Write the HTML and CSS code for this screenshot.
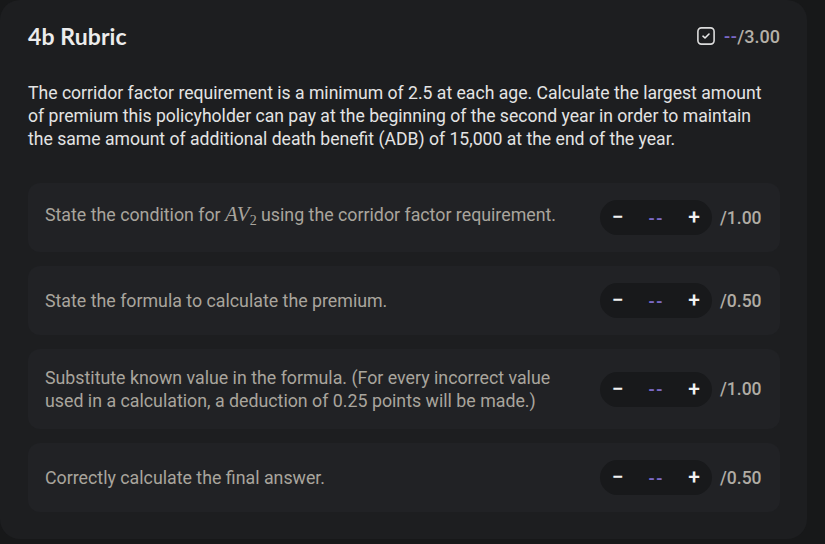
FILE: index.html
```html
<!DOCTYPE html>
<html>
<head>
<meta charset="utf-8">
<link rel="stylesheet" href="styles.css">
</head>
<body>
<div class="card">
  <div class="header">
    <h2 class="title">4b Rubric</h2>
    <div class="total">
      <svg class="check" width="18" height="18" viewBox="0 0 18 18"><rect x="0.9" y="0.9" width="16.2" height="16.2" rx="3.5" fill="none" stroke="#dcdcdc" stroke-width="1.6"/><path d="M6 9.2 L8 11 L12 7" fill="none" stroke="#e8e8e8" stroke-width="1.6" stroke-linecap="round" stroke-linejoin="round"/></svg>
      <span class="dash">--</span><span class="max">/3.00</span>
    </div>
  </div>
  <p class="question">The corridor factor requirement is a minimum of 2.5 at each age. Calculate the largest amount of premium this policyholder can pay at the beginning of the second year in order to maintain the same amount of additional death benefit (ADB) of 15,000 at the end of the year.</p>
  <div class="rows">
    <div class="row">
      <div class="desc">State the condition for <span class="math">AV<sub>2</sub></span> using the corridor factor requirement.</div>
      <div class="stepper"><span class="btn">−</span><span class="val">--</span><span class="btn">+</span></div>
      <div class="pts">/1.00</div>
    </div>
    <div class="row">
      <div class="desc">State the formula to calculate the premium.</div>
      <div class="stepper"><span class="btn">−</span><span class="val">--</span><span class="btn">+</span></div>
      <div class="pts">/0.50</div>
    </div>
    <div class="row">
      <div class="desc">Substitute known value in the formula. (For every incorrect value used in a calculation, a deduction of 0.25 points will be made.)</div>
      <div class="stepper"><span class="btn">−</span><span class="val">--</span><span class="btn">+</span></div>
      <div class="pts">/1.00</div>
    </div>
    <div class="row">
      <div class="desc">Correctly calculate the final answer.</div>
      <div class="stepper"><span class="btn">−</span><span class="val">--</span><span class="btn">+</span></div>
      <div class="pts">/0.50</div>
    </div>
  </div>
</div>
</body>
</html>
```

FILE: styles.css
```css
html, body {
  margin: 0;
  padding: 0;
  background: #171819;
}
body {
  width: 825px;
  height: 544px;
  overflow: hidden;
  font-family: Roboto, "Liberation Sans", sans-serif;
}
.card {
  width: 807px;
  box-sizing: border-box;
  background: #1d1e20;
  border-radius: 20px;
  padding: 24px 27px 27px 28px;
}
.header {
  display: flex;
  align-items: center;
  justify-content: space-between;
  height: 24px;
}
.title {
  margin: 0;
  font-family: Lato, "Open Sans", sans-serif;
  font-weight: 700;
  font-size: 23px;
  color: #ececec;
  letter-spacing: 0.1px;
}
.total {
  display: flex;
  align-items: center;
  font-size: 18px;
  font-weight: 500;
}
.check {
  margin-right: 9px;
}
.dash {
  color: #7b69c6;
  letter-spacing: 0.5px;
}
.max {
  color: #b4b0a8;
}
.question {
  margin: 34px 0 32px;
  font-size: 17.6px;
  line-height: 23px;
  color: #e4e4e4;
}
.rows {
  display: flex;
  flex-direction: column;
  gap: 14px;
}
.row {
  display: flex;
  align-items: center;
  background: #212225;
  border-radius: 12px;
  padding: 17px 18px 17px 17px;
}
.desc {
  flex: 1;
  margin-right: 26px;
  font-size: 17.8px;
  line-height: 23px;
  color: #a9a59d;
}
.math {
  font-family: "Liberation Serif", serif;
  font-style: italic;
  font-size: 21px;
}
.math sub {
  font-style: normal;
  font-size: 14px;
  vertical-align: -4px;
}
.stepper {
  display: grid;
  grid-template-columns: 36px 40px 36px;
  align-items: center;
  width: 112px;
  height: 35px;
  border-radius: 18px;
  background: #18191b;
}
.btn {
  text-align: center;
  color: #f2f2f2;
  font-size: 21px;
  font-weight: 500;
  line-height: 35px;
}
.val {
  text-align: center;
  color: #7b69c6;
  font-size: 17px;
  font-weight: 700;
  letter-spacing: 1px;
}
.pts {
  width: 42px;
  margin-left: 8px;
  font-size: 17.5px;
  font-weight: 500;
  color: #b0aca4;
}
```
